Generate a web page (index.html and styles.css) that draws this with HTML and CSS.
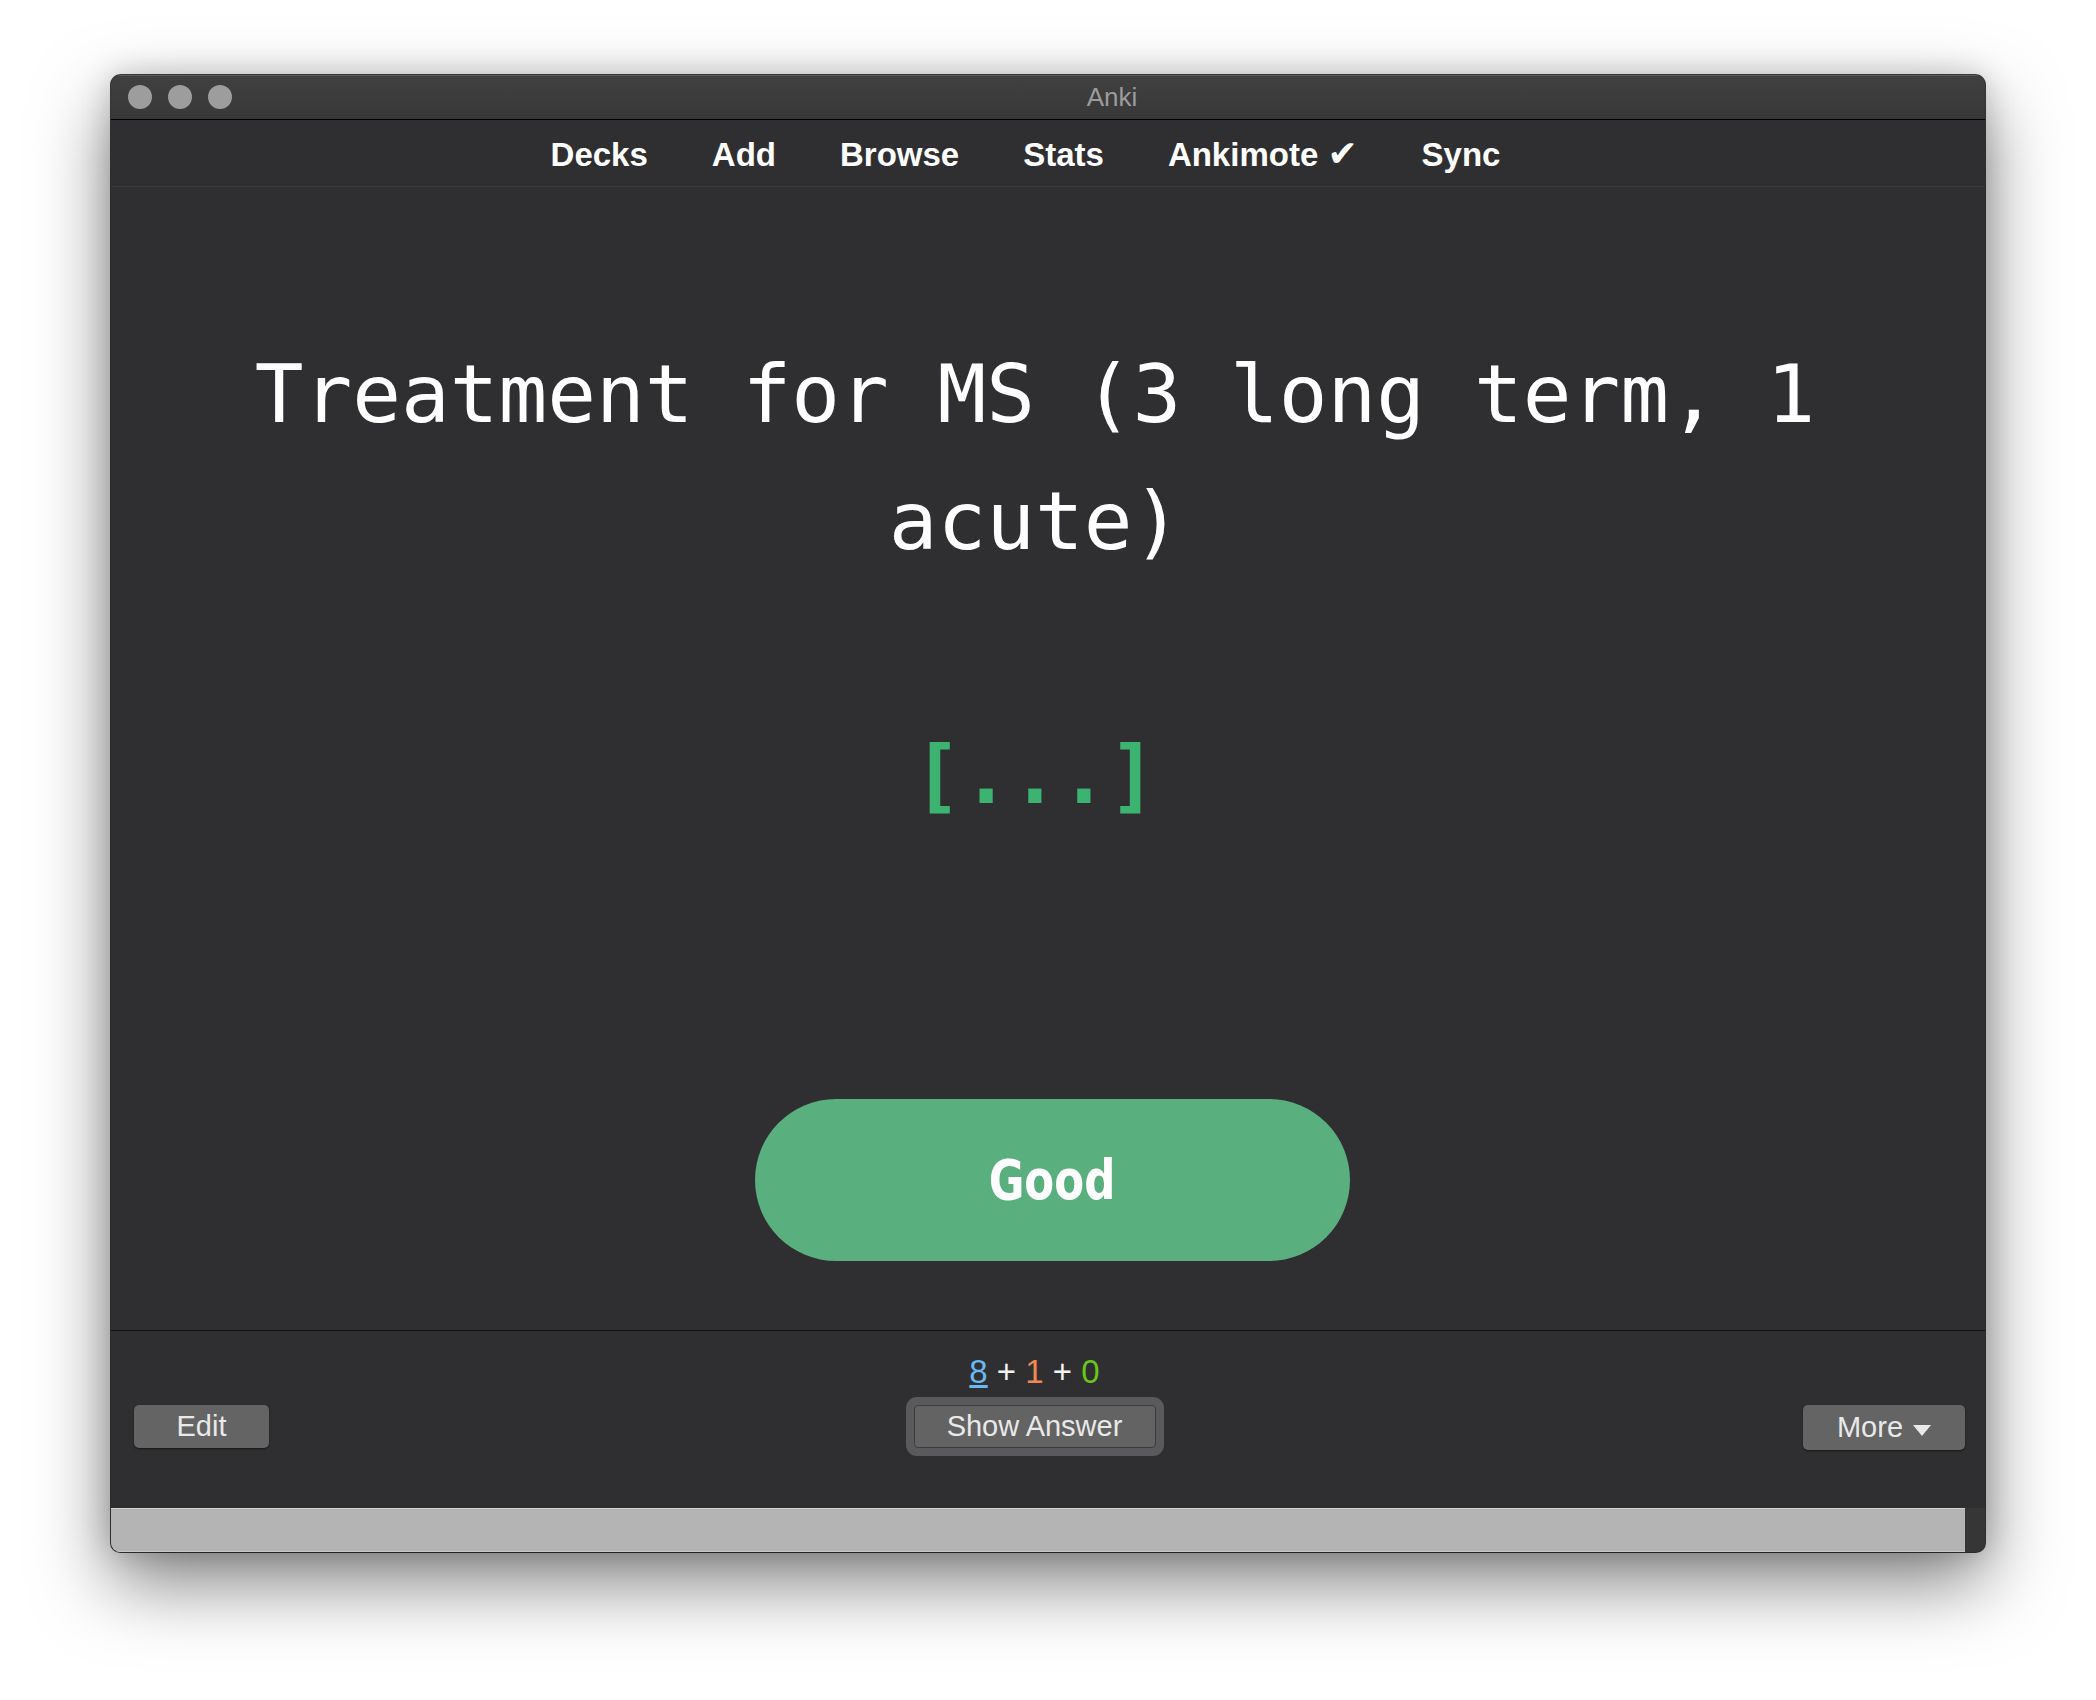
FILE: index.html
```html
<!DOCTYPE html>
<html lang="en">
<head>
<meta charset="utf-8">
<title>Anki</title>
<link rel="stylesheet" href="styles.css">
</head>
<body>
<div class="window">
  <div class="titlebar">
    <div class="lights">
      <span class="light"></span>
      <span class="light"></span>
      <span class="light"></span>
    </div>
    <div class="title">Anki</div>
  </div>
  <nav class="toolbar">
    <span class="nav-item">Decks</span>
    <span class="nav-item">Add</span>
    <span class="nav-item">Browse</span>
    <span class="nav-item">Stats</span>
    <span class="nav-item">Ankimote <span class="check">✔</span></span>
    <span class="nav-item">Sync</span>
  </nav>
  <main class="card">
    <div class="question">Treatment for MS (3 long term, 1<br>acute)</div>
    <div class="cloze">[...]</div>
    <div class="good"><span class="good-label">Good</span></div>
  </main>
  <div class="bottom">
    <div class="btn edit">Edit</div>
    <div class="center-col">
      <div class="counts"><span class="count-new">8</span> + <span class="count-learn">1</span> + <span class="count-review">0</span></div>
      <div class="btn show-answer">Show Answer</div>
    </div>
    <div class="btn more">More <span class="caret"></span></div>
  </div>
  <div class="statusbar">
    <div class="status-main"></div>
    <div class="status-end"></div>
  </div>
</div>
</body>
</html>
```

FILE: styles.css
```css
* {
  box-sizing: border-box;
}

html, body {
  margin: 0;
  padding: 0;
}

body {
  width: 2096px;
  height: 1700px;
  overflow: hidden;
  background: #ffffff;
  font-family: "Liberation Sans", Arial, sans-serif;
}

.window {
  margin: 75px 0 0 111px;
  width: 1874px;
  height: 1477px;
  display: flex;
  flex-direction: column;
  border-radius: 10px 10px 9px 9px;
  overflow: hidden;
  background: #2f2f31;
  box-shadow: 0 0 0 1px rgba(0, 0, 0, 0.75), 0 30px 75px rgba(0, 0, 0, 0.5), 0 0 30px rgba(0, 0, 0, 0.18);
}

/* Title bar */
.titlebar {
  height: 45px;
  flex: none;
  display: flex;
  align-items: center;
  border-bottom: 1px solid #000;
  background: linear-gradient(#404040, #383838);
  box-shadow: inset 0 1px 0 #5c5c5c;
}

.lights {
  display: flex;
  gap: 16px;
  padding-left: 17px;
}

.light {
  width: 24px;
  height: 24px;
  border-radius: 50%;
  background: #9d9d9d;
}

.title {
  flex: 1;
  text-align: center;
  padding-left: 7px;
  color: #9b9b9b;
  font-size: 26px;
}

/* Toolbar */
.toolbar {
  height: 67px;
  flex: none;
  display: flex;
  justify-content: center;
  align-items: center;
  gap: 64px;
  padding: 4px 45px 0 0;
  border-bottom: 1px solid #3b3b3d;
  color: #ffffff;
  font-size: 33px;
  font-weight: bold;
}

.check {
  font-family: "DejaVu Sans", sans-serif;
  font-size: 36px;
  line-height: 1;
}

/* Card */
.card {
  flex: 1;
  display: flex;
  flex-direction: column;
  align-items: center;
  padding: 144px 26px 0 0;
  text-align: center;
}

.question {
  font-family: "DejaVu Sans Mono", "Liberation Mono", monospace;
  font-size: 81px;
  line-height: 127px;
  color: #ffffff;
}

.cloze {
  margin-top: 127px;
  font-family: "DejaVu Sans Mono", "Liberation Mono", monospace;
  font-size: 81px;
  line-height: 127px;
  font-weight: bold;
  color: #3cb371;
}

.good {
  margin-top: 260px;
  margin-left: 34px;
  width: 595px;
  height: 162px;
  border-radius: 81px;
  background: #5aaf7e;
  color: #ffffff;
  display: flex;
  align-items: center;
  justify-content: center;
  font-family: "DejaVu Sans Condensed", "DejaVu Sans", sans-serif;
  font-weight: bold;
  font-size: 55px;
}

.good-label {
  display: inline-block;
  transform: scaleX(0.88);
}

/* Bottom bar */
.bottom {
  height: 178px;
  flex: none;
  border-top: 1px solid #121212;
  display: grid;
  grid-template-columns: 1fr auto 1fr;
  align-items: start;
  padding: 21px 50px 0 23px;
}

.center-col {
  display: flex;
  flex-direction: column;
  align-items: center;
}

.counts {
  font-size: 33px;
  line-height: 40px;
  color: #f2f2f2;
}

.count-new {
  color: #69b8f0;
  text-decoration: underline;
}

.count-learn {
  color: #f0884f;
}

.count-review {
  color: #66c818;
}

.btn {
  height: 43px;
  display: flex;
  align-items: center;
  justify-content: center;
  background: #646464;
  border-radius: 5px;
  color: #e9e9e9;
  font-size: 29px;
  box-shadow: 0 1px 2px rgba(0, 0, 0, 0.55);
}

.edit {
  justify-self: start;
  width: 135px;
  margin-top: 53px;
}

.show-answer {
  margin-top: 13px;
  width: 242px;
  background: #636363;
  border: 1px solid #3c3c3c;
  border-radius: 4px;
  box-shadow: 0 0 0 8px #5a5a5c;
}

.more {
  justify-self: end;
  width: 162px;
  height: 45px;
  margin-top: 53px;
  margin-right: -30px;
}

.caret {
  width: 0;
  height: 0;
  margin-left: 10px;
  margin-top: 6px;
  border-left: 9px solid transparent;
  border-right: 9px solid transparent;
  border-top: 11px solid #e9e9e9;
}

/* Status bar */
.statusbar {
  height: 44px;
  flex: none;
  display: flex;
}

.status-main {
  flex: 1;
  background: #b4b4b4;
  border-top: 1px solid #d0d0d0;
  border-bottom: 1px solid #c6c6c6;
}

.status-end {
  width: 20px;
  background: #363636;
}
```
